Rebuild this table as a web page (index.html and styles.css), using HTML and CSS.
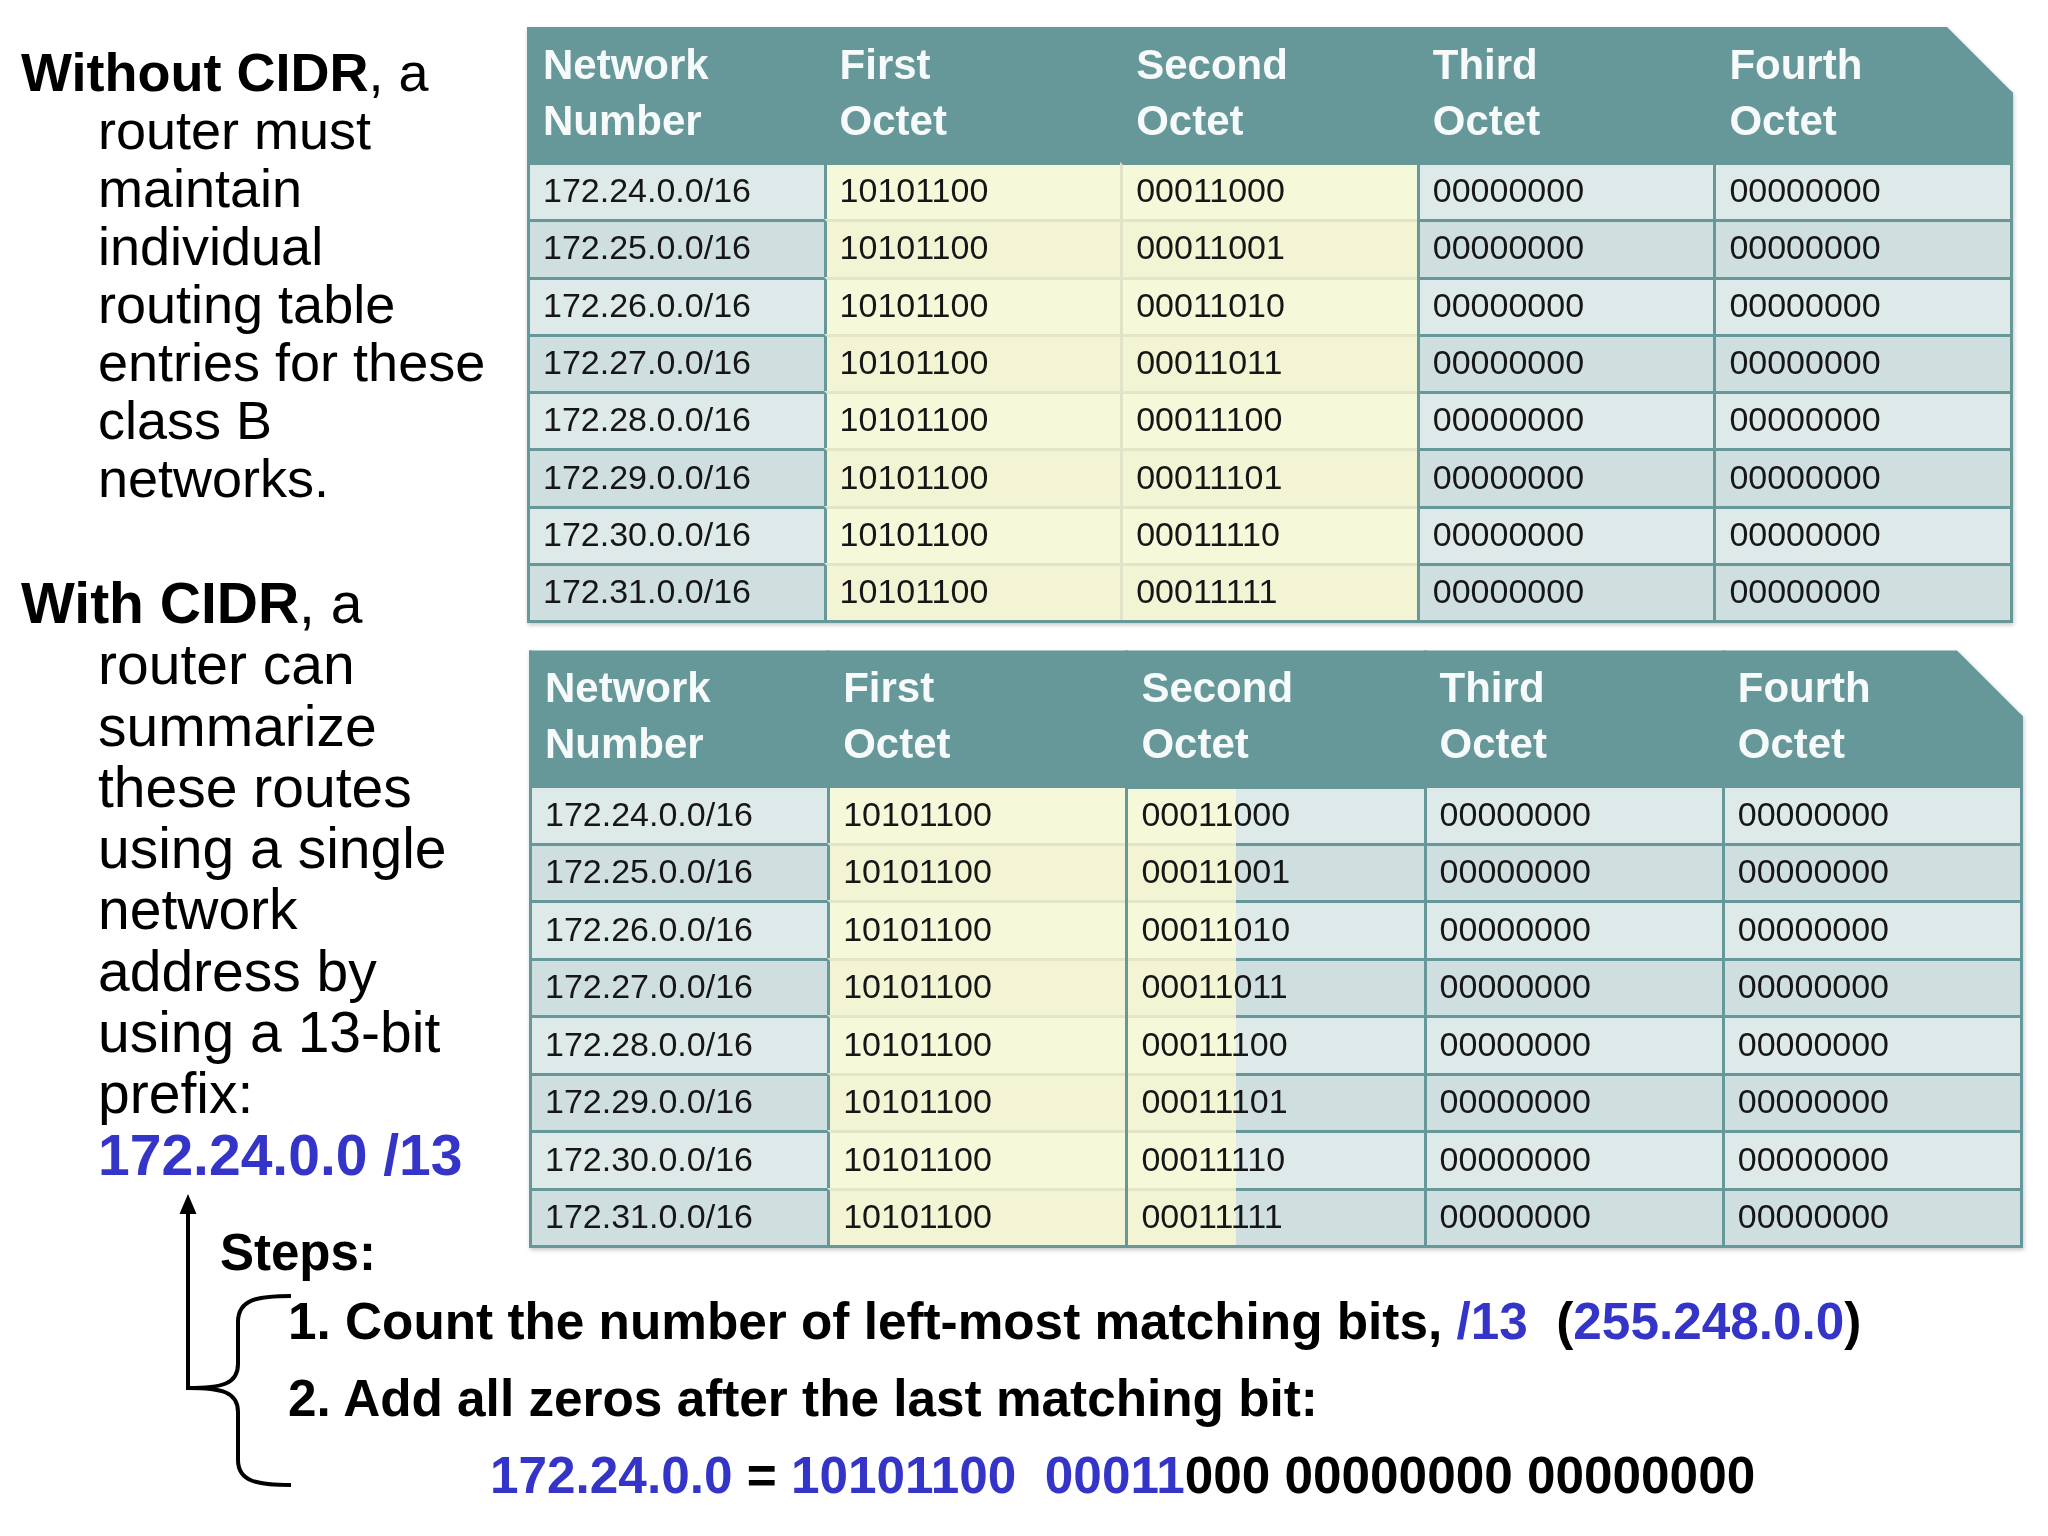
FILE: index.html
```html
<!DOCTYPE html>
<html>
<head>
<meta charset="utf-8">
<link rel="stylesheet" href="styles.css">
</head>
<body>
<div class="page">
  <div class="intro">
    <p class="para p1"><b>Without CIDR</b>, a<br>router must<br>maintain<br>individual<br>routing table<br>entries for these<br>class B<br>networks.</p>
    <p class="para p2"><b>With CIDR</b>, a<br>router can<br>summarize<br>these routes<br>using a single<br>network<br>address by<br>using a 13-bit<br>prefix:<br><b class="blue">172.24.0.0 /13</b></p>
    <p class="steps-title">Steps:</p>
  </div>

  <div class="tables">
    <div class="tbl-wrap">
      <table class="rt">
        <thead>
          <tr><th>Network<br>Number</th><th>First<br>Octet</th><th>Second<br>Octet</th><th>Third<br>Octet</th><th>Fourth<br>Octet</th></tr>
        </thead>
        <tbody>
          <tr><td class="n">172.24.0.0/16</td><td class="y y1">10101100</td><td class="y y2">00011000</td><td class="o">00000000</td><td class="o">00000000</td></tr>
          <tr><td class="n">172.25.0.0/16</td><td class="y y1">10101100</td><td class="y y2">00011001</td><td class="o">00000000</td><td class="o">00000000</td></tr>
          <tr><td class="n">172.26.0.0/16</td><td class="y y1">10101100</td><td class="y y2">00011010</td><td class="o">00000000</td><td class="o">00000000</td></tr>
          <tr><td class="n">172.27.0.0/16</td><td class="y y1">10101100</td><td class="y y2">00011011</td><td class="o">00000000</td><td class="o">00000000</td></tr>
          <tr><td class="n">172.28.0.0/16</td><td class="y y1">10101100</td><td class="y y2">00011100</td><td class="o">00000000</td><td class="o">00000000</td></tr>
          <tr><td class="n">172.29.0.0/16</td><td class="y y1">10101100</td><td class="y y2">00011101</td><td class="o">00000000</td><td class="o">00000000</td></tr>
          <tr><td class="n">172.30.0.0/16</td><td class="y y1">10101100</td><td class="y y2">00011110</td><td class="o">00000000</td><td class="o">00000000</td></tr>
          <tr><td class="n">172.31.0.0/16</td><td class="y y1">10101100</td><td class="y y2">00011111</td><td class="o">00000000</td><td class="o">00000000</td></tr>
        </tbody>
      </table>
    </div>
    <div class="tbl-wrap second">
      <table class="rt wide">
        <thead>
          <tr><th>Network<br>Number</th><th>First<br>Octet</th><th>Second<br>Octet</th><th>Third<br>Octet</th><th>Fourth<br>Octet</th></tr>
        </thead>
        <tbody>
          <tr><td class="n">172.24.0.0/16</td><td class="y y1">10101100</td><td class="split">00011000</td><td class="o">00000000</td><td class="o">00000000</td></tr>
          <tr><td class="n">172.25.0.0/16</td><td class="y y1">10101100</td><td class="split">00011001</td><td class="o">00000000</td><td class="o">00000000</td></tr>
          <tr><td class="n">172.26.0.0/16</td><td class="y y1">10101100</td><td class="split">00011010</td><td class="o">00000000</td><td class="o">00000000</td></tr>
          <tr><td class="n">172.27.0.0/16</td><td class="y y1">10101100</td><td class="split">00011011</td><td class="o">00000000</td><td class="o">00000000</td></tr>
          <tr><td class="n">172.28.0.0/16</td><td class="y y1">10101100</td><td class="split">00011100</td><td class="o">00000000</td><td class="o">00000000</td></tr>
          <tr><td class="n">172.29.0.0/16</td><td class="y y1">10101100</td><td class="split">00011101</td><td class="o">00000000</td><td class="o">00000000</td></tr>
          <tr><td class="n">172.30.0.0/16</td><td class="y y1">10101100</td><td class="split">00011110</td><td class="o">00000000</td><td class="o">00000000</td></tr>
          <tr><td class="n">172.31.0.0/16</td><td class="y y1">10101100</td><td class="split">00011111</td><td class="o">00000000</td><td class="o">00000000</td></tr>
        </tbody>
      </table>
    </div>
  </div>

  <div class="steps">
    <p>1. Count the number of left-most matching bits, <span class="blue">/13</span>&nbsp; (<span class="blue">255.248.0.0</span>)</p>
    <p>2. Add all zeros after the last matching bit:</p>
    <p class="bin"><span class="blue">172.24.0.0</span> = <span class="blue">10101100&nbsp; 00011</span>000 00000000 00000000</p>
  </div>

  <svg class="connector" width="130" height="310" viewBox="170 1185 130 310">
    <line x1="188" y1="1208" x2="188" y2="1390" stroke="#000" stroke-width="4"/>
    <polygon points="179.5,1214 188,1194 196.5,1214" fill="#000"/>
    <path d="M291 1296 C 258 1296 238 1299 238 1322 L 238 1364 C 238 1384 222 1388 188 1388 C 222 1388 238 1392 238 1412 L 238 1460 C 238 1482 258 1485 291 1485" fill="none" stroke="#000" stroke-width="4"/>
  </svg>
</div>
</body>
</html>
```

FILE: styles.css
```css
html, body {
  margin: 0;
  padding: 0;
  background: #ffffff;
}

body {
  font-family: "Liberation Sans", Arial, sans-serif;
  color: #000;
}

.page {
  position: relative;
  width: 2048px;
  height: 1536px;
  display: grid;
  grid-template-columns: 527px auto;
  grid-template-rows: auto 1fr;
}

.blue {
  color: #3434c8;
}

/* ---------- left intro text ---------- */
.intro {
  padding: 43px 0 0 21px;
}

.para {
  margin: 0;
  padding-left: 77px;
  text-indent: -77px;
}

.p1 {
  font-size: 54px;
  line-height: 58px;
}

.p2 {
  font-size: 57px;
  line-height: 61.3px;
  margin-top: 66px;
}

.steps-title {
  margin: 37px 0 0 199px;
  font-size: 51px;
  line-height: 60px;
  font-weight: bold;
}

/* ---------- tables ---------- */
.tables {
  padding-top: 27px;
}

.tbl-wrap {
  width: 1486px;
  filter: drop-shadow(1px 2px 2px rgba(0, 0, 0, 0.22));
}

.tbl-wrap.second {
  width: 1494px;
  margin-top: 27px;
  margin-left: 2px;
}

.rt {
  width: 100%;
  table-layout: fixed;
  border-collapse: separate;
  border-spacing: 0;
  background: #679899;
  border-right: 3px solid #679899;
  border-bottom: 3px solid #679899;
  clip-path: polygon(0 0, calc(100% - 66px) 0, 100% 66px, 100% 100%, 0 100%);
}

.rt thead tr {
  height: 135px;
}

.rt th {
  width: 20%;
  text-align: left;
  vertical-align: top;
  padding: 10px 0 0 13px;
  border-left: 3px solid #679899;
  font-size: 42px;
  line-height: 56px;
  font-weight: bold;
  color: #f6fafa;
}

.rt tbody tr {
  height: 57.3px;
}

.wide tbody tr {
  height: 57.5px;
}

.rt td {
  padding: 0 0 4px 13px;
  border-left: 3px solid #679899;
  border-top: 3px solid #679899;
  font-size: 34px;
  line-height: 38px;
  color: #161616;
  vertical-align: middle;
  white-space: nowrap;
}

.rt td.n,
.rt td.o {
  background: #dee9ea;
}

.rt tbody tr:nth-child(even) td.n,
.rt tbody tr:nth-child(even) td.o {
  background: #cfdfe0;
}

.rt td.y {
  background: #f6f8da;
  border-top-color: #e2e5c8;
}

.rt tbody tr:nth-child(even) td.y {
  background: #f2f4d4;
}

.rt td.y2 {
  border-left-color: #e0e3c8;
}

.rt td.split {
  border-top-color: transparent;
  background-origin: border-box;
  background-repeat: no-repeat;
  background-image:
    linear-gradient(to right, #e2e5c8 0, #e2e5c8 111px, #679899 111px),
    linear-gradient(to right, #f6f8da 0, #f6f8da 111px, #dee9ea 111px);
  background-size: 100% 3px, 100% 100%;
  background-position: top left, top left;
}

.rt tbody tr:nth-child(even) td.split {
  background-image:
    linear-gradient(to right, #e2e5c8 0, #e2e5c8 111px, #679899 111px),
    linear-gradient(to right, #f2f4d4 0, #f2f4d4 111px, #cfdfe0 111px);
}

.rt tbody tr:first-child td {
  border-top-color: #679899;
}

.rt tbody tr:first-child td.split {
  background-image:
    linear-gradient(to right, #679899 0, #679899 111px, #679899 111px),
    linear-gradient(to right, #f6f8da 0, #f6f8da 111px, #dee9ea 111px);
}

/* ---------- steps ---------- */
.steps {
  grid-column: 1 / -1;
  padding-left: 288px;
  font-size: 51.3px;
  line-height: 77px;
  font-weight: bold;
}

.steps p {
  margin: 0;
  white-space: nowrap;
}

.steps .bin {
  padding-left: 202px;
}

/* connector arrow and brace drawn over the layout */
.connector {
  position: absolute;
  left: 170px;
  top: 1185px;
}
```
